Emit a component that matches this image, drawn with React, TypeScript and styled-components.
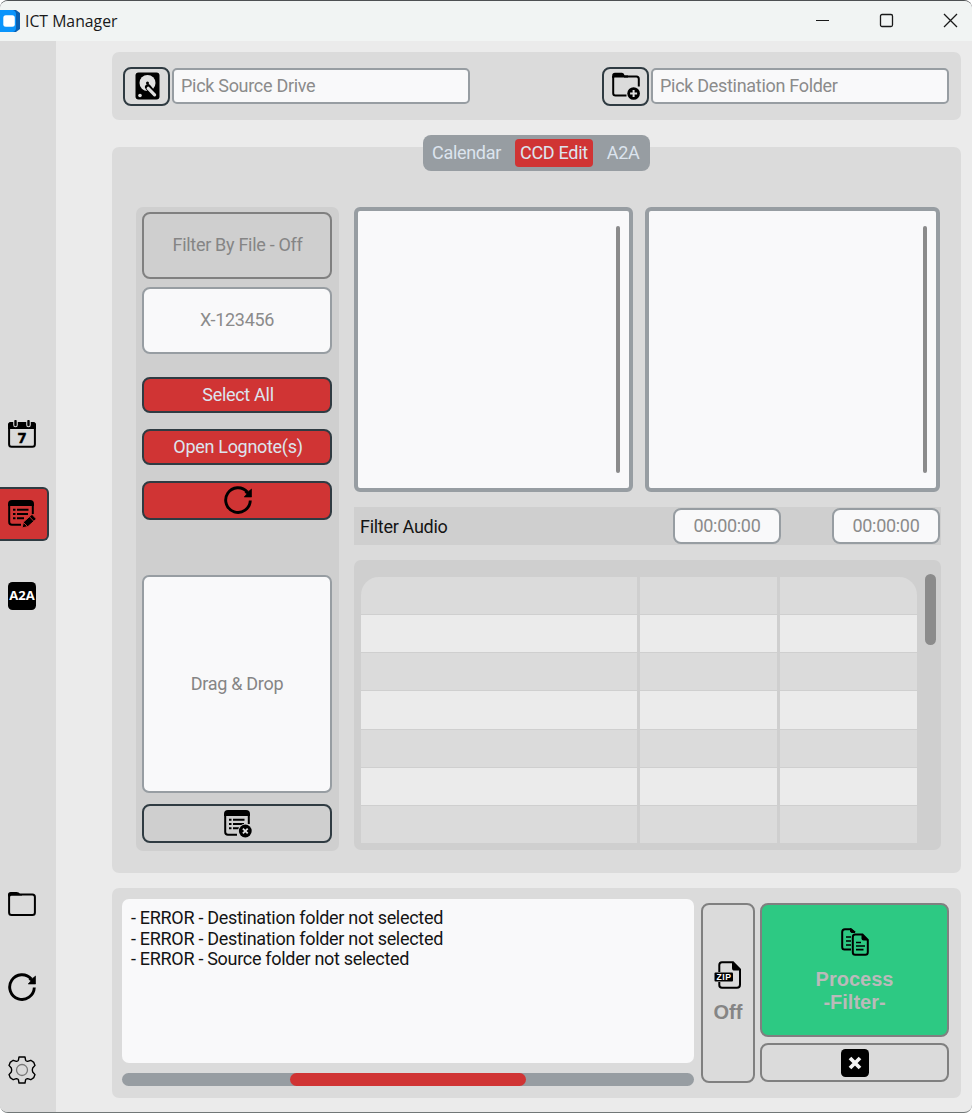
import React from "react";
import styled, { createGlobalStyle, css } from "styled-components";

const GlobalStyle = createGlobalStyle`
  * { box-sizing: border-box; }
  body { margin: 0; background: #ffffff; font-family: Roboto, "Liberation Sans", sans-serif; font-size: 18px; letter-spacing: -0.3px; }
  button, input, textarea { font: inherit; letter-spacing: inherit; margin: 0; }
`;

const AppWindow = styled.div`
  width: 972px;
  height: 1113px;
  display: flex;
  flex-direction: column;
  overflow: hidden;
  border-top: 1px solid #4d5052;
  border-bottom: 1px solid #717777;
  border-radius: 8px;
  background: #ebebeb;
`;

const TitleBar = styled.header`
  flex: none;
  height: 40px;
  display: flex;
  align-items: center;
  background: #f1f4f3;
  color: #191919;
`;

const Title = styled.h1`
  margin: 0 auto 0 5px;
  font: 400 15.8px "Open Sans", "Noto Sans", sans-serif;
  letter-spacing: 0;
`;

const WindowControls = styled.div`
  display: flex;
  gap: 49px;
  padding: 0 14px 1px 0;
`;

const Body = styled.div`
  flex: 1;
  display: flex;
  min-height: 0;
`;

const Sidebar = styled.nav`
  flex: none;
  width: 56px;
  display: flex;
  flex-direction: column;
  background: #dbdbdb;
`;

const NavItem = styled.button<{ $active?: boolean; $gap: number }>`
  width: 49px;
  height: 54px;
  margin: ${(p) => p.$gap}px 0 0;
  padding: 0 0 0 8px;
  display: flex;
  align-items: center;
  border: 2px solid transparent;
  border-left: 0;
  border-radius: 0 6px 6px 0;
  background: transparent;
  ${(p) =>
    p.$active &&
    css`
      background: #d03434;
      border-color: #2f3b42;
    `}
`;

const Content = styled.main`
  width: 849px;
  margin-left: 56px;
  padding-top: 11px;
  display: flex;
  flex-direction: column;
`;

const Panel = styled.section`
  background: #dbdbdb;
  border-radius: 7px;
`;

const PathPanel = styled(Panel)`
  height: 68px;
  padding: 0 12px 0 11px;
  display: flex;
  align-items: center;
  justify-content: space-between;
`;

const PathPicker = styled.div`
  display: flex;
  align-items: center;
  gap: 2px;
`;

const OutlineButton = styled.button<{ $w: number; $h: number; $soft?: boolean }>`
  width: ${(p) => p.$w}px;
  height: ${(p) => p.$h}px;
  padding: 0;
  display: flex;
  flex-direction: column;
  align-items: center;
  justify-content: center;
  border: 2px solid ${(p) => (p.$soft ? "#808080" : "#2f3b42")};
  border-radius: 8px;
  background: transparent;
  color: #858585;
`;

const Field = styled.input<{ $w: number; $h: number; $center?: boolean }>`
  width: ${(p) => p.$w}px;
  height: ${(p) => p.$h}px;
  padding: 0 7px 2px;
  border: 2px solid #979da2;
  border-radius: ${(p) => (p.$center ? 8 : 5)}px;
  background: #f9f9fa;
  text-align: ${(p) => (p.$center ? "center" : "left")};
  &::placeholder { color: #8b8b8b; opacity: 1; }
`;

const Tabs = styled.div`
  width: 227px;
  height: 36px;
  margin: 15px auto 0;
  padding: 0 4px 0 9px;
  display: flex;
  align-items: center;
  gap: 14px;
  border-radius: 8px;
  background: #979da2;
  color: #dce4ee;
  z-index: 1;
`;

const Tab = styled.span<{ $active?: boolean }>`
  height: 28px;
  padding: ${(p) => (p.$active ? "0 5px" : "0")};
  line-height: 27px;
  white-space: nowrap;
  border-radius: 4px;
  background: ${(p) => (p.$active ? "#d03434" : "transparent")};
`;

const WorkPanel = styled(Panel)`
  height: 726px;
  margin-top: -24px;
  padding: 60px 20px 0 24px;
  display: flex;
  gap: 15px;
`;

const Tools = styled.div`
  width: 203px;
  height: 644px;
  padding: 5px 7px 0 6px;
  display: flex;
  flex-direction: column;
  background: #cfcfcf;
  border-radius: 7px;
`;

const FilterToggle = styled(OutlineButton)`
  padding: 0 0 2px 1px;
`;

const NumberField = styled(Field)`
  margin: 8px 0 23px;
`;

const RedButton = styled.button<{ $h: number }>`
  width: 190px;
  height: ${(p) => p.$h}px;
  margin-bottom: 16px;
  padding: 0 0 1px 2px;
  display: flex;
  align-items: center;
  justify-content: center;
  border: 2px solid #2f3b42;
  border-radius: 8px;
  background: #d03434;
  color: #dce4ee;
`;

const DropZone = styled.div`
  width: 190px;
  height: 218px;
  margin: 39px 0 11px;
  padding-bottom: 2px;
  display: flex;
  align-items: center;
  justify-content: center;
  border: 2px solid #979da2;
  border-radius: 7px;
  background: #f9f9fa;
  color: #858585;
`;

const ClearButton = styled(OutlineButton)`
  padding-left: 2px;
`;

const Results = styled.div`
  width: 587px;
  display: flex;
  flex-direction: column;
`;

const ListRow = styled.div`
  display: flex;
  justify-content: space-between;
  padding-right: 1px;
`;

const ListBox = styled.div<{ $w: number }>`
  width: ${(p) => p.$w}px;
  height: 285px;
  padding: 15px 9px 0 0;
  display: flex;
  justify-content: flex-end;
  border: 4px solid #979da2;
  border-radius: 6px;
  background: #f9f9fa;
`;

const ScrollThumb = styled.div<{ $w: number; $h: number }>`
  width: ${(p) => p.$w}px;
  height: ${(p) => p.$h}px;
  border-radius: 6px;
  background: #8b8b8b;
`;

const AudioFilter = styled.div`
  height: 38px;
  margin: 15px 0;
  padding: 0 1px 0 6px;
  display: flex;
  align-items: center;
  gap: 51px;
  background: #cfcfcf;
  color: #141414;
`;

const AudioLabel = styled.span`
  margin-right: auto;
`;

const TableFrame = styled.div`
  height: 290px;
  padding: 14px 5px 7px 7px;
  display: flex;
  justify-content: space-between;
  background: #cfcfcf;
  border-radius: 7px;
`;

const Table = styled.div`
  width: 556px;
  margin-top: 3px;
  display: grid;
  grid-template-columns: 276px 137px 137px;
  grid-template-rows: repeat(7, 1fr);
  column-gap: 3px;
  row-gap: 1px;
  border-radius: 18px 18px 0 0;
  overflow: hidden;
`;

const Cell = styled.div<{ $light: boolean }>`
  background: ${(p) => (p.$light ? "#ebebeb" : "#dbdbdb")};
`;

const RunPanel = styled(Panel)`
  height: 210px;
  margin-top: 15px;
  padding: 11px 11px 0 10px;
  display: flex;
`;

const LogColumn = styled.div`
  width: 572px;
  margin-right: 7px;
`;

const Log = styled.div`
  height: 164px;
  padding: 9px 9px;
  border-radius: 7px;
  background: #f9f9fa;
  color: #141414;
  line-height: 20.7px;
`;

const Progress = styled.div`
  height: 13px;
  margin-top: 10px;
  border-radius: 7px;
  background: #979da2;
`;

const ProgressBar = styled.div`
  width: 236px;
  height: 13px;
  margin-left: 168px;
  border-radius: 7px;
  background: #d03434;
`;

const ZipButton = styled(OutlineButton)`
  margin: 4px 5px 0 0;
  padding-bottom: 3px;
  gap: 12px;
  font: 700 20px/22px "Liberation Sans", sans-serif;
  letter-spacing: 0;
`;

const RunColumn = styled.div`
  padding-top: 4px;
  display: flex;
  flex-direction: column;
  gap: 6px;
`;

const ProcessButton = styled(OutlineButton)`
  gap: 12px;
  padding-top: 2px;
  background: #2dc983;
  color: #bababa;
  font: 700 20px/23px "Liberation Sans", sans-serif;
  letter-spacing: 0;
`;

const IconSvg = styled.svg`
  display: block;
`;

const Icon = ({ children }: { children: React.ReactNode }) => (
  <IconSvg width="28" height="28" viewBox="0 0 28 28" fill="none" stroke="#000" strokeWidth="2" letterSpacing="0">
    {children}
  </IconSvg>
);

const LogoIcon = () => (
  <svg width="20" height="22" viewBox="0 0 20 22">
    <path d="M0 0H16L20 3V19L16 22H0Z" fill="#0a5fb0" />
    <path d="M0 0H13Q16 1 16 4V18Q16 21 13 22H0Z" fill="#0a94fb" />
    <rect x="3.3" y="5.3" width="11.5" height="11.5" rx="2.5" fill="#fff" />
  </svg>
);

const DriveIcon = () => (
  <Icon>
    <rect x="2.5" y=".5" width="24" height="27" rx="3" fill="#000" stroke="none" />
    <circle cx="14.5" cy="11" r="8" fill="#e0e0e0" stroke="none" />
    <path d="M15 15.2L21.5 23.2" stroke="#000" strokeWidth="6" strokeLinecap="round" />
    <path d="M15.2 16.3L21.6 22.8" stroke="#e0e0e0" strokeWidth="3.2" strokeLinecap="round" />
    <circle cx="14.5" cy="11" r="1.5" fill="#000" stroke="none" />
    <circle cx="7" cy="23.5" r="1.8" fill="#e0e0e0" stroke="none" />
  </Icon>
);

const FolderAddIcon = () => (
  <Icon>
    <path d="M14.5 23.5H3.5Q1.2 23.5 1.2 21.2V4M12 4.5H24.5Q26.8 4.5 26.8 7V14.5" />
    <path d="M.2 6V3.5Q.2 .8 3 .8H10Q12 .8 12.6 3.5H16V5.5H3Z" fill="#000" stroke="none" />
    <circle cx="21.6" cy="21.5" r="6.3" fill="#000" stroke="none" />
    <path d="M21.6 18V25M18.1 21.5H25.1" stroke="#e0e0e0" />
  </Icon>
);

const CalendarIcon = () => (
  <Icon>
    <rect x="1.1" y="3" width="25.8" height="23.8" rx="2.5" />
    <path d="M0 9V5Q0 2 3 2H25Q28 2 28 5V9Z" fill="#000" stroke="none" />
    <path d="M7.5 .5V5M20.5 .5V5" stroke="#dbdbdb" strokeWidth="4.6" strokeLinecap="round" />
    <path d="M7.5 1V5M20.5 1V5" strokeWidth="2.4" strokeLinecap="round" />
    <text x="14" y="23" textAnchor="middle" textLength="9.6" lengthAdjust="spacingAndGlyphs" fill="#000" stroke="#000" strokeWidth=".3" fontFamily="DejaVu Sans" fontWeight="700" fontSize="13.6">7</text>
  </Icon>
);

const NoteBase = () => (
  <>
    <path d="M13 24.8H4Q1.2 24.8 1.2 22V4M24.8 4V14" />
    <path d="M0 6V4Q0 0 4 0H22Q26 0 26 4V6Z" fill="#000" stroke="none" />
    <path d="M5 9.7H7.5M9 9.7H20.5M5 14H7.5M9 14H20M5 18.3H7.5M9 18.3H16" />
  </>
);

const NoteEditIcon = () => (
  <Icon>
    <NoteBase />
    <path d="M14 28L15.5 22L24 14.3L28.4 19L20 26.5Z" fill="#000" stroke="#d03434" strokeWidth="1" />
    <path d="M21.6 16.8L25.6 21M16 23L19 26" stroke="#d03434" strokeWidth=".9" />
  </Icon>
);

const NoteRemoveIcon = () => (
  <Icon>
    <NoteBase />
    <circle cx="21.3" cy="21" r="7.3" fill="#cfcfcf" stroke="none" />
    <circle cx="21.3" cy="21" r="6.4" fill="#000" stroke="none" />
    <path d="M18.9 18.6L23.7 23.4M23.7 18.6L18.9 23.4" stroke="#e0e0e0" strokeWidth="1.8" />
  </Icon>
);

const A2AIcon = () => (
  <Icon>
    <rect width="28" height="28" rx="4.5" fill="#000" stroke="none" />
    <text x="14" y="18.2" textAnchor="middle" textLength="25.4" lengthAdjust="spacingAndGlyphs" fill="#fff" stroke="none" fontFamily="Open Sans" fontWeight="700" fontSize="12">A2A</text>
  </Icon>
);

const FolderIcon = () => (
  <Icon>
    <rect x="1.1" y="4.5" width="25.8" height="20.4" rx="2.5" />
    <path d="M0 7V4.5Q0 2 2.8 2H8.5Q11 2 12 4H14V5.5H2Z" fill="#000" stroke="none" />
  </Icon>
);

const RefreshIcon = () => (
  <Icon>
    <path d="M26.3 14.5A12.3 12.3 0 1 1 23.3 6" strokeWidth="2.9" />
    <path d="M27.6 3V11H20.2L22.8 8L20.8 6.2L24.8 5.2Z" fill="#000" stroke="#000" strokeWidth=".6" />
  </Icon>
);

const GearIcon = () => (
  <Icon>
    <path
      d="M11 1H17L17.6 4.2Q18 5.1 19.6 5.4L22.8 4.3L25.8 6.4L27 9.4L24.7 12Q23.9 14 24.7 16L27 18.6L25.8 21.6L22.8 23.7L19.6 22.6Q18 22.9 17.6 23.8L17 27H11L10.4 23.8Q10 22.9 8.4 22.6L5.2 23.7L2.2 21.6L1 18.6L3.3 16Q4.1 14 3.3 12L1 9.4L2.2 6.4L5.2 4.3L8.4 5.4Q10 5.1 10.4 4.2Z"
      strokeWidth="1.4"
      strokeLinejoin="round"
    />
    <circle cx="14" cy="14" r="5.5" stroke="#777" strokeWidth="1.3" />
  </Icon>
);

const ZipIcon = () => (
  <Icon>
    <path d="M5.3 11V4Q5.3 1.2 8 1.2H19L26 8.5V23.5Q26 26.8 23 26.8H8Q5.3 26.8 5.3 24V21" />
    <path d="M18 1L26.7 9V9.6H20.5Q18 9.6 18 7Z" fill="#000" stroke="none" />
    <rect x=".5" y="11.4" width="18.5" height="9.2" rx="1" fill="#000" stroke="none" />
    <text x="9.8" y="19" textAnchor="middle" textLength="14.5" fill="#fff" stroke="none" fontFamily="Liberation Sans" fontWeight="700" fontSize="8.6">ZIP</text>
  </Icon>
);

const CopyIcon = () => (
  <Icon>
    <path d="M10 21.5H3.5Q1.2 21.5 1.2 19V4Q1.2 1.2 4 1.2H10L14 4.5" />
    <path d="M9.5 .5L14 4.5H11Q9.5 4.5 9.5 3Z" fill="#000" strokeWidth="1" />
    <path d="M5 9H10M5 13H10M5 17H10" strokeWidth="1.7" />
    <path d="M14 6.5H21.5L26.8 12V24.3Q26.8 26.8 24.3 26.8H14.2Q11.8 26.8 11.8 24.3V9Q11.8 6.5 14 6.5Z" />
    <path d="M20.5 6L27 12.5H22.5Q20.5 12.5 20.5 10.5Z" fill="#000" stroke="none" />
    <path d="M15 14.5H20M15 18H24M15 21.7H22.5" strokeWidth="1.7" />
  </Icon>
);

const CancelIcon = () => (
  <Icon>
    <rect width="28" height="28" rx="4.5" fill="#000" stroke="none" />
    <path d="M9 9L19 19M19 9L9 19" stroke="#f3f3f3" strokeWidth="3.8" />
  </Icon>
);

const MESSAGES = [
  "- ERROR - Destination folder not selected",
  "- ERROR - Destination folder not selected",
  "- ERROR - Source folder not selected",
];

export default function App() {
  return (
    <AppWindow>
      <GlobalStyle />
      <TitleBar>
        <LogoIcon />
        <Title>ICT Manager</Title>
        <WindowControls>
          <svg width="15" height="15" viewBox="0 0 15 15" stroke="#191919" strokeWidth="1.2"><path d="M1 7.5H14" /></svg>
          <svg width="15" height="15" viewBox="0 0 15 15" fill="none" stroke="#191919" strokeWidth="1.3"><rect x="1.5" y="1.5" width="12" height="12" rx="1.5" /></svg>
          <svg width="15" height="15" viewBox="0 0 15 15" stroke="#191919" strokeWidth="1.3"><path d="M1 1L14 14M14 1L1 14" /></svg>
        </WindowControls>
      </TitleBar>
      <Body>
        <Sidebar>
          <NavItem $gap={366}><CalendarIcon /></NavItem>
          <NavItem $gap={26} $active><NoteEditIcon /></NavItem>
          <NavItem $gap={28}><A2AIcon /></NavItem>
          <NavItem $gap={254}><FolderIcon /></NavItem>
          <NavItem $gap={29}><RefreshIcon /></NavItem>
          <NavItem $gap={29}><GearIcon /></NavItem>
        </Sidebar>
        <Content>
          <PathPanel>
            <PathPicker>
              <OutlineButton $w={47} $h={39}><DriveIcon /></OutlineButton>
              <Field $w={298} $h={36} placeholder="Pick Source Drive" />
            </PathPicker>
            <PathPicker>
              <OutlineButton $w={47} $h={39}><FolderAddIcon /></OutlineButton>
              <Field $w={298} $h={36} placeholder="Pick Destination Folder" />
            </PathPicker>
          </PathPanel>
          <Tabs>
            <Tab>Calendar</Tab>
            <Tab $active>CCD Edit</Tab>
            <Tab>A2A</Tab>
          </Tabs>
          <WorkPanel>
            <Tools>
              <FilterToggle $w={190} $h={67} $soft>Filter By File - Off</FilterToggle>
              <NumberField $w={190} $h={67} $center placeholder="X-123456" />
              <RedButton $h={36}>Select All</RedButton>
              <RedButton $h={36}>Open Lognote(s)</RedButton>
              <RedButton $h={39}><RefreshIcon /></RedButton>
              <DropZone>Drag &amp; Drop</DropZone>
              <ClearButton $w={190} $h={39}><NoteRemoveIcon /></ClearButton>
            </Tools>
            <Results>
              <ListRow>
                <ListBox $w={279}><ScrollThumb $w={4} $h={247} /></ListBox>
                <ListBox $w={295}><ScrollThumb $w={4} $h={247} /></ListBox>
              </ListRow>
              <AudioFilter>
                <AudioLabel>Filter Audio</AudioLabel>
                <Field $w={108} $h={36} $center placeholder="00:00:00" />
                <Field $w={108} $h={36} $center placeholder="00:00:00" />
              </AudioFilter>
              <TableFrame>
                <Table>
                  {Array.from({ length: 21 }, (_, i) => (
                    <Cell key={i} $light={Math.floor(i / 3) % 2 === 1} />
                  ))}
                </Table>
                <ScrollThumb $w={11} $h={71} />
              </TableFrame>
            </Results>
          </WorkPanel>
          <RunPanel>
            <LogColumn>
              <Log>
                {MESSAGES.map((message, i) => (
                  <div key={i}>{message}</div>
                ))}
              </Log>
              <Progress><ProgressBar /></Progress>
            </LogColumn>
            <ZipButton $w={54} $h={180} $soft><ZipIcon />Off</ZipButton>
            <RunColumn>
              <ProcessButton $w={189} $h={134} $soft>
                <CopyIcon />
                <div>Process<br />-Filter-</div>
              </ProcessButton>
              <OutlineButton $w={189} $h={39} $soft><CancelIcon /></OutlineButton>
            </RunColumn>
          </RunPanel>
        </Content>
      </Body>
    </AppWindow>
  );
}
